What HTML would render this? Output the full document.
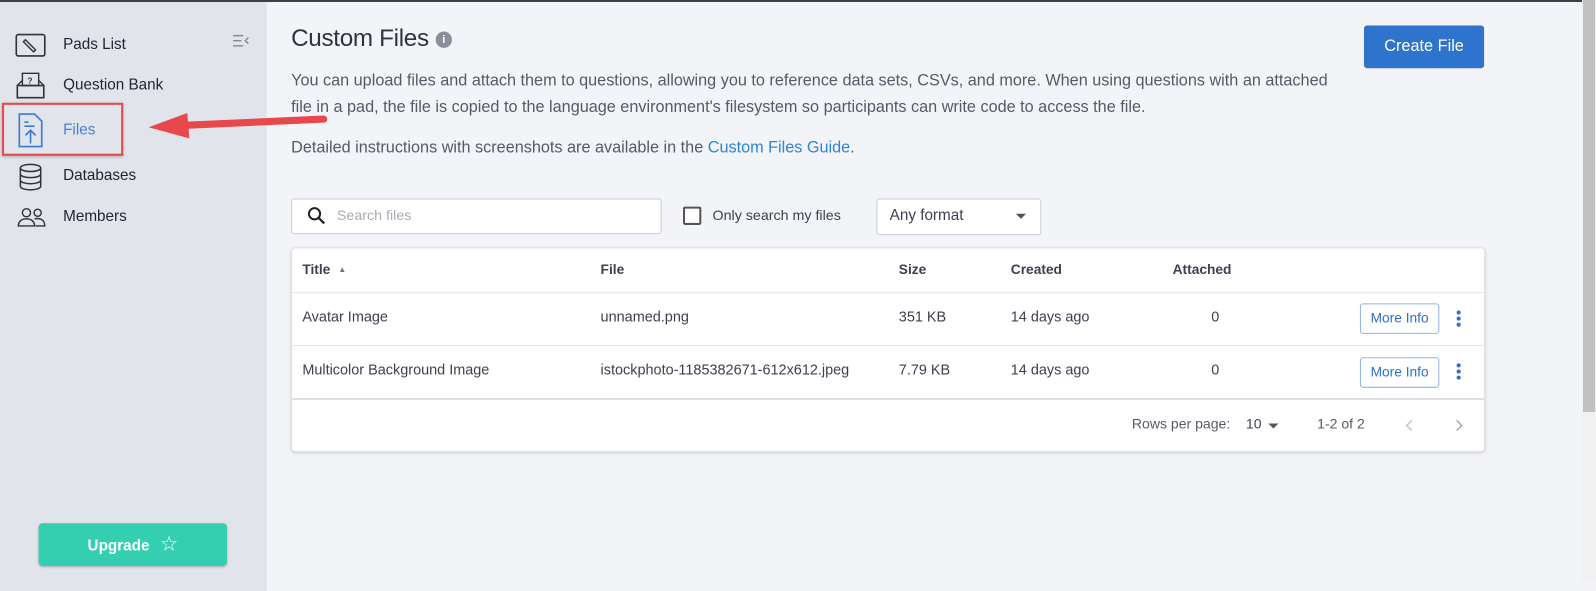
<!DOCTYPE html>
<html><head><meta charset="utf-8"><style>
*{box-sizing:border-box;margin:0;padding:0}
body{width:1596px;height:581px;overflow:hidden;background:#f3f4f8;font-family:"Liberation Sans",sans-serif;color:#3c4150;position:relative}
.abs{position:absolute;white-space:nowrap}
#wrap{position:absolute;left:0;top:0;width:1568px;height:571px;transform:scale(1.0179);transform-origin:0 0}
#topline{left:0;top:0;width:1582px;height:2px;background:#3a3f4b}
#side{left:0;top:2px;width:262px;height:579px;background:#e1e4ea}
.nav{font-size:15px;color:#1f2430}
#scroll{left:1582px;top:0;width:14px;height:581px;background:#f1f1f1}
#thumb{left:1583px;top:0;width:12px;height:412px;background:#c1c1c1}
p.t{font-size:15.95px;color:#555b66}
.card{left:286px;top:243px;width:1173px;height:201px;background:#fff;border:1px solid #e0e2e6;border-radius:4px;box-shadow:0 1px 3px rgba(0,0,0,.15)}
.th{font-size:13.5px;font-weight:bold;color:#3c4150}
.td{font-size:14.2px;color:#3c4150}
.mi{width:78px;height:30px;border:1px solid #8fb3e4;border-radius:3px;color:#2d6fcb;font-size:13.5px;text-align:center;line-height:28px;background:#fff}
.dots{width:4px}
.dots i{display:block;width:4px;height:4px;border-radius:2px;background:#2d6fcb;margin-bottom:2px}
</style></head><body>
<div id="wrap">
<div class="abs" id="side"></div>
<!-- sidebar icons -->
<svg class="abs" style="left:14px;top:32px" width="32" height="26" viewBox="0 0 32 26"><rect x="2" y="2" width="28" height="21" rx="2" fill="none" stroke="#333" stroke-width="1.6"/><path d="M11 7l10 10-2 2-10-10z" fill="none" stroke="#333" stroke-width="1.4"/></svg>
<div class="abs nav" style="left:62px;top:35px">Pads List</div>
<svg class="abs" style="left:228px;top:34px" width="18" height="12" viewBox="0 0 18 12"><path d="M1 1h10M1 6h8M1 11h10M16 3l-3 3 3 3" stroke="#888" stroke-width="1.4" fill="none"/></svg>
<svg class="abs" style="left:15px;top:70px" width="30" height="28" viewBox="0 0 30 28"><path d="M7 2h16v12H7z" fill="none" stroke="#333" stroke-width="1.4"/><path d="M2 14h26v12H2z" fill="none" stroke="#333" stroke-width="1.6"/><path d="M2 14l5-5M28 14l-5-5" stroke="#333" stroke-width="1.4"/><text x="12" y="12" font-size="8" font-weight="bold" fill="#333" font-family="Liberation Sans">?</text></svg>
<div class="abs nav" style="left:62px;top:75px">Question Bank</div>
<div class="abs" style="left:2px;top:101px;width:119px;height:52px;border:2px solid #e8474b;box-shadow:0 1px 3px rgba(0,0,0,.3)"></div>
<svg class="abs" style="left:17px;top:110px" width="26" height="36" viewBox="0 0 26 36"><path d="M2 2h15l7 7v25H2z" fill="none" stroke="#3a7bd5" stroke-width="1.6"/><path d="M7 10h4M7 14h10M13 31V18M8 23l5-5 5 5" stroke="#3a7bd5" stroke-width="1.6" fill="none"/></svg>
<div class="abs nav" style="left:62px;top:119px;color:#4a7fd0">Files</div>
<svg class="abs" style="left:146px;top:108px" width="180" height="30" viewBox="0 0 180 30"><path d="M172 9L38 15" stroke="#e8474b" stroke-width="7" stroke-linecap="round"/><path d="M0 17L38 3L40 28z" fill="#e8474b"/></svg>
<svg class="abs" style="left:17px;top:160px" width="26" height="28" viewBox="0 0 26 28"><ellipse cx="13" cy="5" rx="10" ry="3.5" fill="none" stroke="#333" stroke-width="1.5"/><path d="M3 5v18c0 2 4.5 3.5 10 3.5s10-1.5 10-3.5V5M3 11c0 2 4.5 3.5 10 3.5s10-1.5 10-3.5M3 17c0 2 4.5 3.5 10 3.5s10-1.5 10-3.5" fill="none" stroke="#333" stroke-width="1.5"/></svg>
<div class="abs nav" style="left:62px;top:164px">Databases</div>
<svg class="abs" style="left:17px;top:203px" width="28" height="20" viewBox="0 0 28 20"><circle cx="9" cy="6" r="4" fill="none" stroke="#333" stroke-width="1.4"/><circle cx="20" cy="6" r="3.5" fill="none" stroke="#333" stroke-width="1.4"/><path d="M1 19c0-5 4-7 8-7s8 2 8 7zM17 12c4-1 10 0 10 7h-9" fill="none" stroke="#333" stroke-width="1.4"/></svg>
<div class="abs nav" style="left:62px;top:204px">Members</div>
<div class="abs" style="left:38px;top:514px;width:185px;height:42px;background:#34cfb0;border-radius:4px;box-shadow:0 1px 2px rgba(0,0,0,.25);color:#fff;font-size:15px;font-weight:bold;text-align:center;line-height:42px">Upgrade <span style="font-size:20px;font-weight:normal;margin-left:6px">☆</span></div>

<!-- main -->
<div class="abs" style="left:286px;top:24px;font-size:23.8px;color:#2e3340;letter-spacing:-0.3px">Custom Files</div>
<div class="abs" style="left:428px;top:31px;width:16px;height:16px;border-radius:8px;background:#8a8f99;color:#fff;font-size:11px;font-weight:bold;text-align:center;line-height:16px">i</div>
<div class="abs" style="left:1340px;top:25px;width:118px;height:42px;background:#2e73cc;border-radius:3px;color:#fff;font-size:16px;text-align:center;line-height:42px">Create File</div>
<p class="abs t" style="left:286px;top:71px">You can upload files and attach them to questions, allowing you to reference data sets, CSVs, and more. When using questions with an attached</p>
<p class="abs t" style="left:286px;top:97px">file in a pad, the file is copied to the language environment's filesystem so participants can write code to access the file.</p>
<p class="abs t" style="left:286px;top:137px">Detailed instructions with screenshots are available in the <span style="color:#2f86d6">Custom Files Guide</span>.</p>

<div class="abs" style="left:286px;top:195px;width:364px;height:35px;background:#fff;border:1px solid #c9ccd2;border-radius:3px"></div>
<svg class="abs" style="left:302px;top:203px" width="18" height="18" viewBox="0 0 18 18"><circle cx="7" cy="7" r="5.5" fill="none" stroke="#222" stroke-width="2"/><path d="M11 11l5.5 5.5" stroke="#222" stroke-width="2.2"/></svg>
<div class="abs" style="left:331px;top:203px;font-size:14px;color:#a8acb4">Search files</div>
<div class="abs" style="left:671px;top:203px;width:18px;height:18px;border:2px solid #555;border-radius:2px;background:#fff"></div>
<div class="abs" style="left:700px;top:203px;font-size:14px;color:#3c4150">Only search my files</div>
<div class="abs" style="left:861px;top:195px;width:162px;height:36px;background:#fff;border:1px solid #c9ccd2;border-radius:3px"></div>
<div class="abs" style="left:874px;top:203px;font-size:15px;color:#3c4150">Any format</div>
<div class="abs" style="left:998px;top:210px;border-left:5px solid transparent;border-right:5px solid transparent;border-top:5px solid #555"></div>

<div class="abs card"></div>
<div class="abs" style="left:287px;top:287px;width:1171px;height:1px;background:#e3e5e9"></div>
<div class="abs" style="left:287px;top:339px;width:1171px;height:1px;background:#e3e5e9"></div>
<div class="abs" style="left:287px;top:391px;width:1171px;height:2px;background:#dcdee2"></div>
<div class="abs th" style="left:297px;top:257px">Title <span style="font-size:8px;color:#777;margin-left:4px;vertical-align:2px">▲</span></div>
<div class="abs th" style="left:590px;top:257px">File</div>
<div class="abs th" style="left:883px;top:257px">Size</div>
<div class="abs th" style="left:993px;top:257px">Created</div>
<div class="abs th" style="left:1152px;top:257px">Attached</div>

<div class="abs td" style="left:297px;top:304px">Avatar Image</div>
<div class="abs td" style="left:590px;top:304px">unnamed.png</div>
<div class="abs td" style="left:883px;top:304px">351 KB</div>
<div class="abs td" style="left:993px;top:304px">14 days ago</div>
<div class="abs td" style="left:1190px;top:304px">0</div>
<div class="abs mi" style="left:1336px;top:298px">More Info</div>
<div class="abs dots" style="left:1431px;top:305px"><i></i><i></i><i></i></div>

<div class="abs td" style="left:297px;top:356px">Multicolor Background Image</div>
<div class="abs td" style="left:590px;top:356px">istockphoto-1185382671-612x612.jpeg</div>
<div class="abs td" style="left:883px;top:356px">7.79 KB</div>
<div class="abs td" style="left:993px;top:356px">14 days ago</div>
<div class="abs td" style="left:1190px;top:356px">0</div>
<div class="abs mi" style="left:1336px;top:351px">More Info</div>
<div class="abs dots" style="left:1431px;top:357px"><i></i><i></i><i></i></div>

<div class="abs td" style="left:1112px;top:409px;color:#555b66;font-size:13.8px">Rows per page:</div>
<div class="abs td" style="left:1224px;top:409px;font-size:13.8px">10</div>
<div class="abs" style="left:1246px;top:416px;border-left:5px solid transparent;border-right:5px solid transparent;border-top:5px solid #555"></div>
<div class="abs td" style="left:1294px;top:409px;color:#555b66;font-size:13.8px">1-2 of 2</div>
<svg class="abs" style="left:1379px;top:411px" width="12" height="14" viewBox="0 0 12 14"><path d="M8 2L3 7l5 5" stroke="#c3c6cc" stroke-width="1.6" fill="none"/></svg>
<svg class="abs" style="left:1427px;top:411px" width="12" height="14" viewBox="0 0 12 14"><path d="M4 2l5 5-5 5" stroke="#a8acb4" stroke-width="1.6" fill="none"/></svg>
</div>
<div class="abs" id="topline"></div>
<div class="abs" id="scroll"></div><div class="abs" id="thumb"></div>
</body></html>
